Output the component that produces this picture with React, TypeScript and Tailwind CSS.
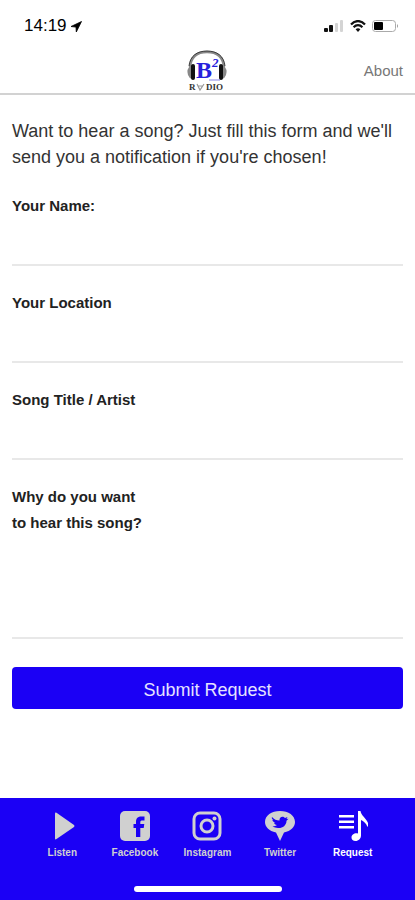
import type { ReactNode } from "react";

const fields = [
  { id: "name", label: "Your Name:" },
  { id: "location", label: "Your Location" },
  { id: "song", label: "Song Title / Artist" },
];

function StatusBar() {
  return (
    <div className="flex h-[50px] items-center justify-between pt-[2px] pr-4 pl-6">
      <div className="flex items-center gap-1 text-[17px] leading-5 text-black">
        <span>14:19</span>
        <svg width="11" height="11" viewBox="0 0 11 11">
          <path d="M10.5.5 0 5.5l5 .6.3 4.900z" fill="#000" stroke="#000" strokeWidth=".8" />
        </svg>
      </div>
      <div className="flex items-center gap-[6px]">
        <svg width="20" height="12" viewBox="0 0 20 12">
          <rect x="0" y="8" width="4" height="4" rx="1" fill="#111" />
          <rect x="5" y="5" width="4" height="7" rx="1" fill="#111" />
          <rect x="11" y="3" width="3" height="9" rx="1" fill="#d4d4d4" />
          <rect x="16" y="0" width="3" height="12" rx="1" fill="#d4d4d4" />
        </svg>
        <svg width="16" height="12" viewBox="0 0 16 12" fill="none" stroke="#111" strokeWidth="2.2">
          <path d="M1 4.4C5-.1 11-.1 15 4.4" />
          <path d="M3.6 7.2c2.6-2.7 6.2-2.7 8.8 0" />
          <path d="M5.6 9.2c1.4-1.3 3.4-1.3 4.8 0L8 12z" fill="#111" stroke="none" />
        </svg>
        <svg width="27" height="12" viewBox="0 0 27 12">
          <rect x=".5" y=".5" width="23" height="11" rx="3" fill="none" stroke="#aaa" />
          <rect x="2" y="2" width="9" height="8" rx="1" fill="#000" />
          <path d="M25 4q2 2 0 4z" fill="#999" />
        </svg>
      </div>
    </div>
  );
}

function Logo() {
  return (
    <svg width="42" height="42" viewBox="0 0 42 42" role="img" aria-label="B2 Radio">
      <path d="M4 17C5 6 12 2 21 2s16 4 17 15" fill="none" stroke="#888" strokeWidth="2.4" />
      <path d="M3 16C4 6 11 1 21 1s17 5 18 15" fill="none" stroke="#222" strokeWidth=".8" />
      <path d="M5 15q-5 4-3 10 1 3 4 4V15zM37 15q5 4 3 10-1 3-4 4V15z" fill="#888" />
      <rect x="5" y="14" width="4" height="16" rx="2" fill="#111" />
      <rect x="33" y="14" width="4" height="16" rx="2" fill="#111" />
      <path d="M23 30h11" stroke="#8585e8" strokeWidth="1" />
      <text x="10" y="28" fontFamily="Liberation Serif, serif" fontWeight="700" fontSize="24" fill="#2722dc">B</text>
      <text x="26" y="17" fontFamily="Liberation Serif, serif" fontStyle="italic" fontWeight="700" fontSize="13" fill="#2722dc">2</text>
      <g fontFamily="Liberation Serif, serif" fontWeight="700" fontSize="9" fill="#333">
        <text x="3" y="40">R</text>
        <text x="20" y="40">DIO</text>
      </g>
      <path d="m11 34 3 6 4-6M12 36h5" fill="none" stroke="#999" strokeWidth="1.2" />
    </svg>
  );
}

function PlayIcon() {
  return (
    <svg width="30" height="30" viewBox="0 0 30 30" fill="currentColor">
      <path d="M8 2.500Q8 1 9.500 1.800L27 14Q28 15 27 16L9.500 28Q8 29 8 27.500z" />
    </svg>
  );
}

function FacebookIcon() {
  return (
    <svg width="30" height="30" viewBox="0 0 30 30">
      <rect width="30" height="30" rx="5" fill="currentColor" />
      <path
        d="M16 26V17h-2.500v-4H16v-2c0-4 2-5.500 5.500-5.500h3v4h-2c-1.600 0-2.200.6-2.200 2V13h4l-.6 4h-3.400v9z"
        fill="#1b00f5"
      />
    </svg>
  );
}

function InstagramIcon() {
  return (
    <svg width="30" height="30" viewBox="0 0 30 30" fill="none" stroke="currentColor" strokeWidth="3">
      <rect x="2" y="2" width="26" height="26" rx="6" />
      <circle cx="15" cy="15" r="6" />
      <circle cx="22.500" cy="7.500" r="2" fill="currentColor" stroke="none" />
    </svg>
  );
}

function TwitterIcon() {
  return (
    <svg width="30" height="30" viewBox="0 0 30 30">
      <path d="M15 0C6.500 0 0 4.500 0 11c0 5 4 9 11 10.500l4 8.500 4-8.500c7-1.500 11-5.500 11-10.500C30 4.500 23.500 0 15 0z" fill="currentColor" />
      <path
        d="M7 6c2 2.500 4.500 3.500 7.500 3.500C14 6 18 4.500 20 7l2.500-1-1 2 2-.3-2 2c0 5-4.500 7.800-8.500 7.300-2 0-4-.6-5.500-1.700 2 0 3.500-.5 4.500-1.300-1.700-.2-2.700-1.200-3-2.200h1.300C8 11 7.300 9.800 7.500 8.800l1 .3C6.800 8 6.500 7 7 6z"
        fill="#1b00f5"
      />
    </svg>
  );
}

function RequestIcon() {
  return (
    <svg width="30" height="30" viewBox="0 0 30 30" fill="currentColor">
      <path d="M1 4h15v2.500H1zM1 9.500h15V12H1zM1 15h15v2.500H1z" />
      <path d="M20 0h2.500c.5 5 7 7.500 8 14l-1 2c-1.500-4-4-6-6.500-7v15.500c0 3-2.500 5.500-5.500 5.500-2.500 0-4-1.500-4-3.500 0-3 3.500-5 6.500-4z" />
    </svg>
  );
}

type Tab = { label: string; icon: ReactNode; active?: boolean };

const tabs: Tab[] = [
  { label: "Listen", icon: <PlayIcon /> },
  { label: "Facebook", icon: <FacebookIcon /> },
  { label: "Instagram", icon: <InstagramIcon /> },
  { label: "Twitter", icon: <TwitterIcon /> },
  { label: "Request", icon: <RequestIcon />, active: true },
];

export default function App() {
  return (
    <div className="flex min-h-screen flex-col bg-white font-['Liberation_Sans',Arial,sans-serif] text-[#222]">
      <StatusBar />

      {/* Header */}
      <header className="grid h-[45px] grid-cols-3 items-center border-b-2 border-[#d2d2d2] px-3 pb-1">
        <div className="col-start-2 flex justify-center">
          <Logo />
        </div>
        <a href="#about" className="justify-self-end text-[15px] leading-5 text-[#777]">
          About
        </a>
      </header>

      {/* Request form */}
      <main className="flex-1 px-3 pt-[23px] pb-6">
        <p className="text-lg leading-[26px] text-[#333]">
          Want to hear a song? Just fill this form and we'll send you a notification if you're chosen!
        </p>
        <form className="mt-[23px] flex flex-col gap-6" onSubmit={(e) => e.preventDefault()}>
          {fields.map((field) => (
            <div key={field.id} className="flex flex-col">
              <label htmlFor={field.id} className="text-[15px] leading-[26px] font-bold">
                {field.label}
              </label>
              <input
                id={field.id}
                type="text"
                className="h-[47px] w-full border-b-2 border-[#e8e8e8] outline-none"
              />
            </div>
          ))}
          <div className="flex flex-col">
            <label htmlFor="reason" className="text-[15px] leading-[26px] font-bold">
              Why do you want
              <br />
              to hear this song?
            </label>
            <textarea
              id="reason"
              className="h-[103px] w-full resize-none border-b-2 border-[#e8e8e8] outline-none"
            />
          </div>
          <button
            type="submit"
            className="mt-1 h-[42px] w-full rounded bg-[#1b00f5] pt-1 text-lg text-[#e6e3ff]"
          >
            Submit Request
          </button>
        </form>
      </main>

      {/* Bottom tabs */}
      <nav className="flex h-[102px] flex-col items-center justify-between bg-[#1b00f5] px-[26px] pt-[13px] pb-2">
        <div className="grid w-full grid-cols-5">
          {tabs.map((tab) => (
            <a
              key={tab.label}
              href={`#${tab.label.toLowerCase()}`}
              className={`flex flex-col items-center gap-[6px] text-[10px] leading-3 font-bold ${
                tab.active ? "text-white" : "text-[#d0d0d0]"
              }`}
            >
              {tab.icon}
              {tab.label}
            </a>
          ))}
        </div>
        <div className="h-[6px] w-[148px] rounded-full bg-white" />
      </nav>
    </div>
  );
}
